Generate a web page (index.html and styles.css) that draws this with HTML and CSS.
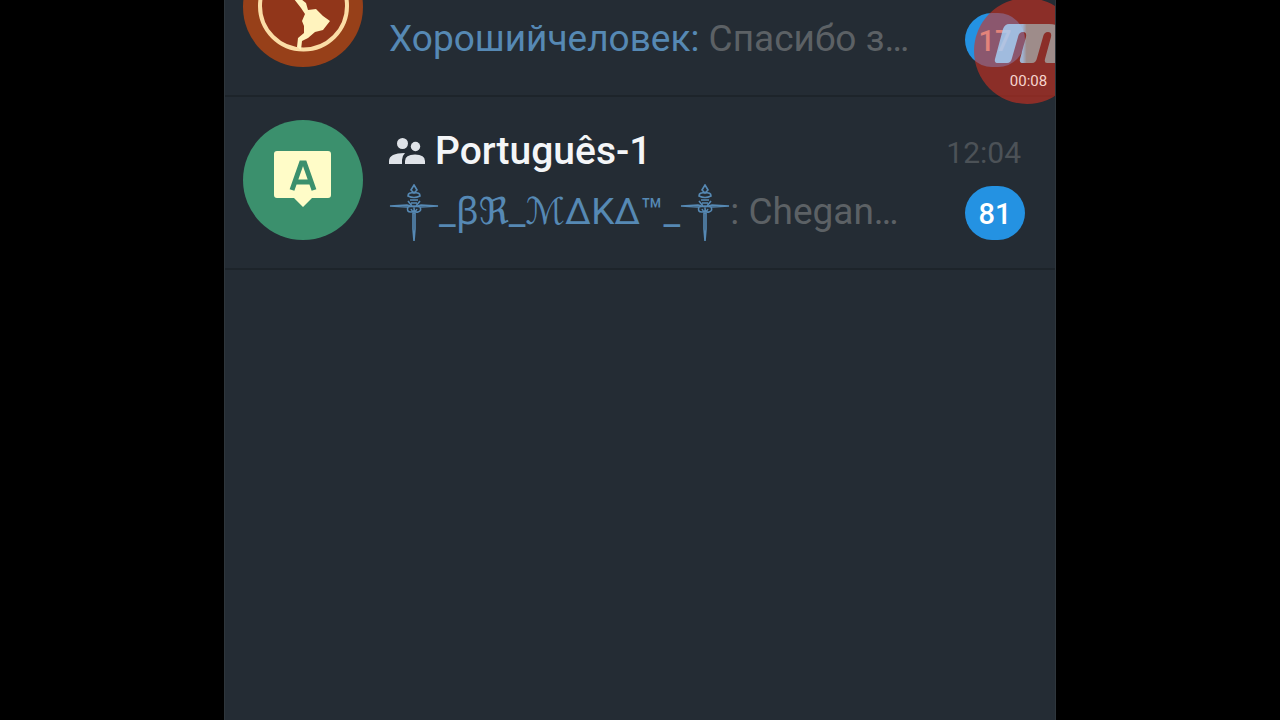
FILE: index.html
```html
<!DOCTYPE html>
<html lang="pt">
<head>
<meta charset="utf-8">
<title>Chats</title>
<link rel="stylesheet" href="styles.css">
</head>
<body>
<svg class="defs" aria-hidden="true">
  <symbol id="dagger" viewBox="0 0 48 60">
    <g fill="none" stroke="currentColor" stroke-width="1.6">
      <path d="M24 1l3 5-3 3-3-3zM18 12q0-4 6-3q6-1 6 3q-6 3-12 0zM20 16h8M21 19h6M18 17l4 5M30 17l-4 5"/>
      <path d="M0 22l17-1 7 2 7-2 17 1-17 1-7-1-7 1z"/>
      <path d="M18 23q-2 5 3 5q4 0 3-4q0 5 4 4q4-1 2-5M21 25q3 6 6 0"/>
      <path d="M23 29v16l1 12 1-12V29z"/>
    </g>
  </symbol>
</svg>
<main class="screen">
  <ul class="chats">
    <li class="chat">
      <svg class="avatar" viewBox="0 0 120 120" aria-hidden="true">
        <circle cx="60" cy="60" r="60" fill="#974019"/>
        <circle cx="60.500" cy="59" r="43.500" fill="#91361a" stroke="#fbdda6" stroke-width="4"/>
        <path d="M50 38l8 14 5 4 2 7 8-1 7 7 7 5-7 9-8 2-7 6-6 3-1 9-4-3 1-9 6-5 0-7-2-5 3-7-4-6-7-9-9-9z" fill="#fff3be"/>
      </svg>
      <div class="body">
        <p class="preview"><span class="sender">Хорошийчеловек:</span> Спасибо з…</p>
      </div>
      <div class="meta"><span class="badge">17</span></div>
    </li>
    <li class="chat">
      <svg class="avatar" viewBox="0 0 120 120" aria-hidden="true">
        <circle cx="60" cy="60" r="60" fill="#3b906d"/>
        <path d="M34 31h51q3 0 3 3v41q0 3-3 3H69L60 87 51 78H34q-3 0-3-3V34q0-3 3-3z" fill="#fffcc8"/>
        <path d="M49 70L58.500 43h3L71 70M52 62h16" fill="none" stroke="#3b906d" stroke-width="5"/>
      </svg>
      <div class="body">
        <h2 class="title">
          <svg class="group" viewBox="0 0 36 26" aria-hidden="true" fill="#dfe3e8">
            <circle cx="13.500" cy="5.500" r="5.500"/><circle cx="26.500" cy="8.500" r="4.700"/>
            <path d="M0 26v-3q0-8 16-8q-3 3-3 7v4zM16 26v-3q0-6.500 10-6.500t10 6.500v3z"/>
          </svg>
          Português-1
        </h2>
        <p class="preview"><span class="sender"><svg class="dagger" role="img" aria-label="†"><use href="#dagger"/></svg>_ꞵℜ_ℳΔKΔ™_<svg class="dagger" role="img" aria-label="†"><use href="#dagger"/></svg></span>: Chegan…</p>
      </div>
      <div class="meta"><time class="time">12:04</time><span class="badge">81</span></div>
    </li>
  </ul>
  <div class="recorder">
    <svg class="logo" viewBox="0 0 66 42" aria-hidden="true">
      <defs>
        <linearGradient id="tint" gradientUnits="userSpaceOnUse" x1="0" y1="0" x2="66" y2="0">
          <stop offset="0" stop-color="#a6d4fb"/>
          <stop offset="0.480" stop-color="#a6d4fb"/>
          <stop offset="0.540" stop-color="#a3a4a3"/>
          <stop offset="1" stop-color="#a3a4a3"/>
        </linearGradient>
      </defs>
      <path d="M4 37L12 7q2-5 6-5h40q8 0 8 3v36H56q-3 0-2-4l6-22q1-5-3-5t-5 5l-6 21q-1 5-5 5h-9q-4 0-3-4l6-22q1-5-3-5t-5 5l-6 21q-1 5-5 5H7q-4 0-3-4z" fill="url(#tint)"/>
    </svg>
    <span class="clock">00:08</span>
  </div>
</main>
</body>
</html>
```
FILE: styles.css
```css
* { box-sizing: border-box; }

body {
  margin: 0;
  background: #000;
  font-family: Roboto, "DejaVu Sans", sans-serif;
}

.defs { position: absolute; width: 0; height: 0; }

.screen {
  position: relative;
  width: 65%;
  min-height: 100vh;
  margin: 0 auto;
  overflow: hidden;
  background: #242c34;
  border: solid #2e363c;
  border-width: 0 1px;
}

/* The list is scrolled, so its first row starts above the window. */
.chats {
  margin: -76px 0 0;
  padding: 0;
  list-style: none;
}

.chat {
  display: flex;
  gap: 26px;
  padding: 23px 30px 28px 18px;
  border-bottom: 2px solid #1d242a;
}

.avatar { flex: none; width: 120px; height: 120px; }

.body, .meta {
  display: flex;
  flex-direction: column;
  justify-content: flex-end;
}

.body { flex: 1; min-width: 0; }

.title, .preview {
  margin: 0;
  white-space: nowrap;
}

.title {
  display: flex;
  align-items: center;
  gap: 10px;
  color: #f4f6f8;
  font-size: 39px;
  font-weight: 500;
  line-height: 58px;
}

.group { width: 36px; height: 26px; }

.preview {
  height: 60px;
  color: #5c6165;
  font-size: 37px;
  line-height: 64px;
}

.sender { color: #5689b4; }

.dagger { width: 50px; height: 60px; vertical-align: middle; }

.meta { align-items: flex-end; }

.time {
  padding-right: 4px;
  color: #4c5257;
  font-size: 30px;
  line-height: 66px;
}

.badge {
  min-width: 60px;
  height: 54px;
  border-radius: 27px;
  background: #2492e2;
  color: #fff;
  font-size: 29px;
  font-weight: 500;
  line-height: 56px;
  text-align: center;
}

/* Floating recorder button, partly off the edge. */
.recorder {
  position: absolute;
  top: -2px;
  right: -25px;
  width: 106px;
  height: 106px;
  border-radius: 50%;
  background: rgba(208, 48, 34, 0.6);
}

.logo {
  position: absolute;
  top: 24px;
  left: 17px;
  width: 66px;
  height: 42px;
  opacity: 0.8;
}

.clock {
  position: absolute;
  top: 74px;
  left: 0;
  width: 100%;
  padding-left: 3px;
  color: #f6d5ce;
  font-size: 15px;
  line-height: 18px;
  text-align: center;
}
```
